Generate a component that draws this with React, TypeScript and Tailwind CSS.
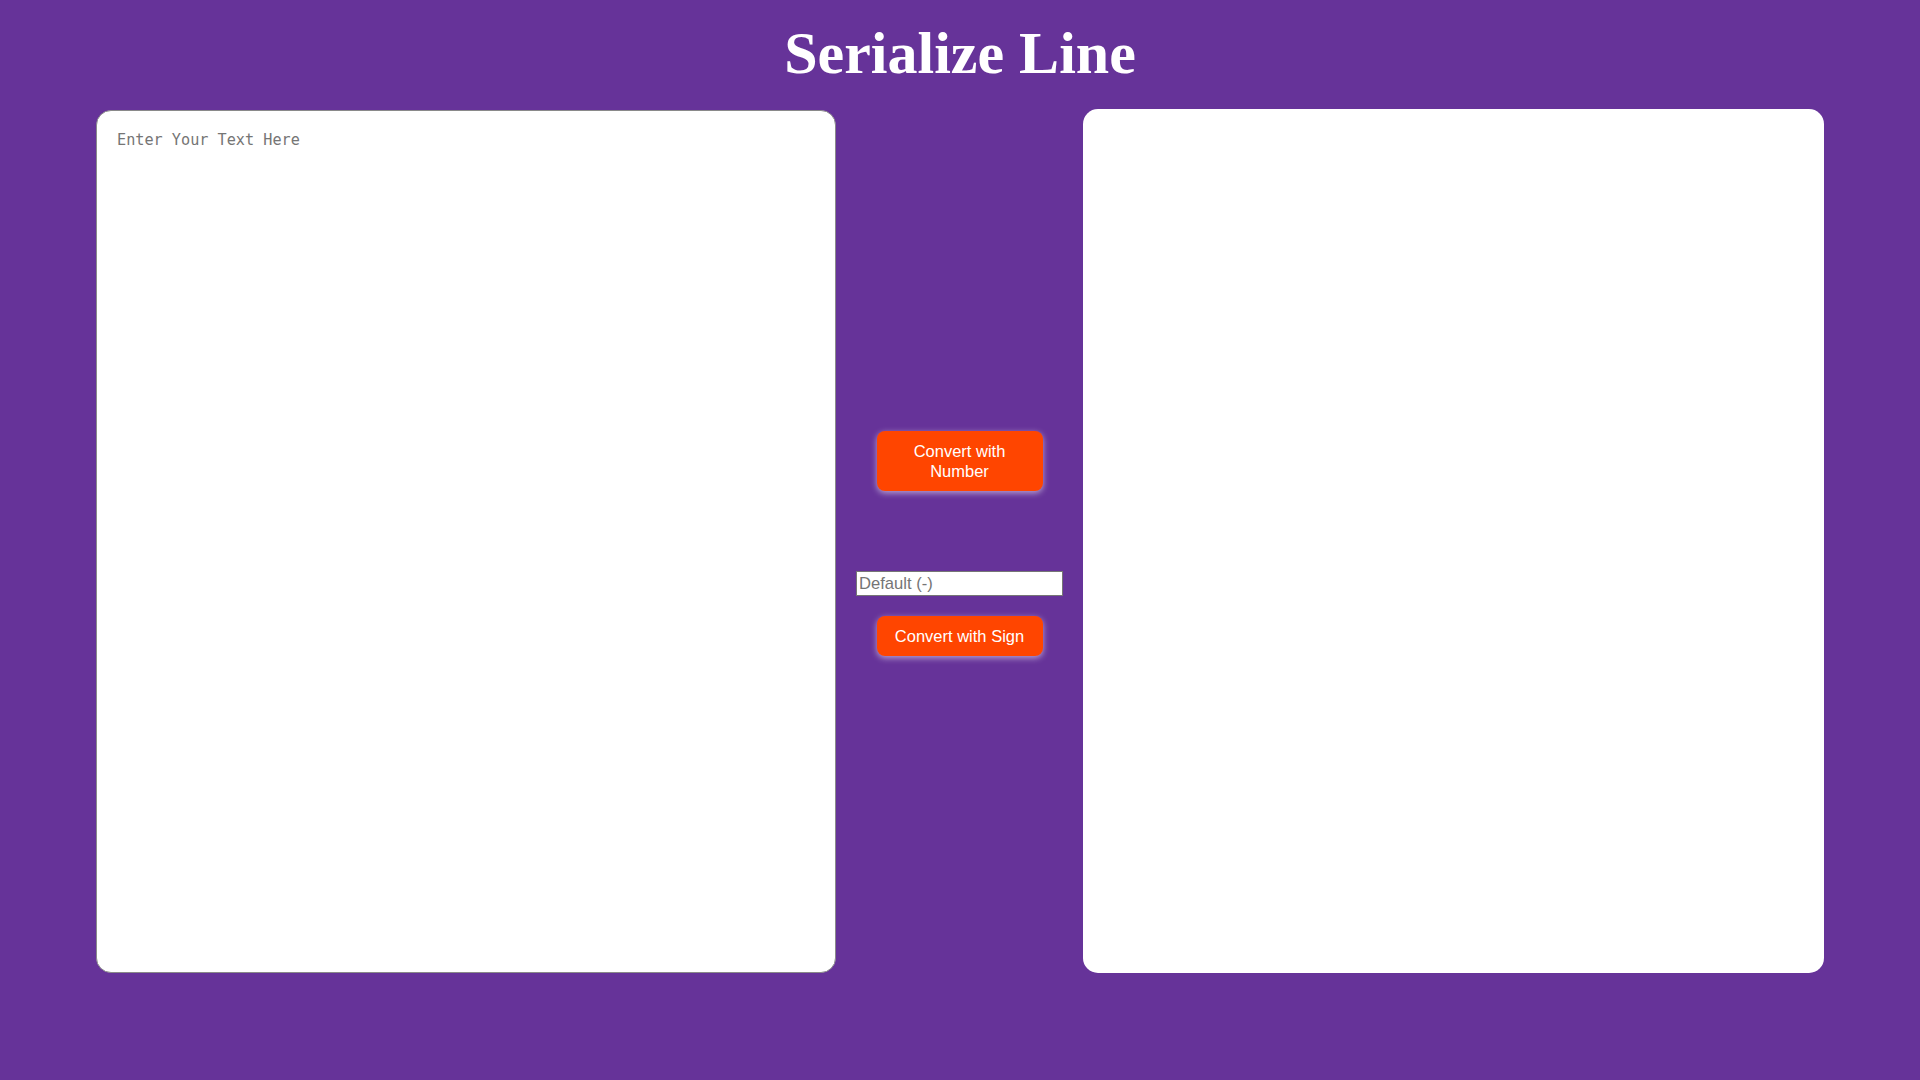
export default function App() {
  return (
    <div className="min-h-screen w-full bg-[#663399] flex flex-col items-center">
      <h1 className="mt-[19px] text-[60px] leading-[69px] font-bold text-white" style={{ fontFamily: '"Liberation Serif", "Times New Roman", serif' }}>
        Serialize Line
      </h1>
      <div className="mt-[21px] flex flex-row items-center justify-center">
        <textarea
          placeholder="Enter Your Text Here"
          className="w-[740px] h-[863px] bg-white border border-[#8a8a8a] rounded-[15px] px-[20px] pt-[19px] pb-[20px] text-[15.2px] leading-[20px] text-black placeholder:text-[#757575] resize-none outline-none"
          style={{ fontFamily: '"DejaVu Sans Mono", "Liberation Mono", monospace' }}
        />
        <div className="mx-[20px] mt-[5px] w-[207px] flex flex-col items-center" style={{ fontFamily: '"Liberation Sans", Arial, sans-serif' }}>
          <button className="w-[166px] h-[60px] bg-[#ff4500] text-white text-[16.5px] leading-[20px] rounded-[8px] shadow-[0_2px_6px_rgba(255,255,255,0.55)] px-[20px]">
            Convert with Number
          </button>
          <input
            placeholder="Default (-)"
            className="mt-[80px] w-[207px] h-[25px] bg-white border border-[#767676] text-[16.6px] px-[2px] text-black placeholder:text-[#757575] outline-none"
          />
          <button className="mt-[20px] w-[166px] h-[40px] bg-[#ff4500] text-white text-[16.5px] leading-[20px] rounded-[8px] shadow-[0_2px_6px_rgba(255,255,255,0.55)]">
            Convert with Sign
          </button>
        </div>
        <div className="w-[741px] h-[864px] bg-white rounded-[15px]" />
      </div>
    </div>
  );
}
